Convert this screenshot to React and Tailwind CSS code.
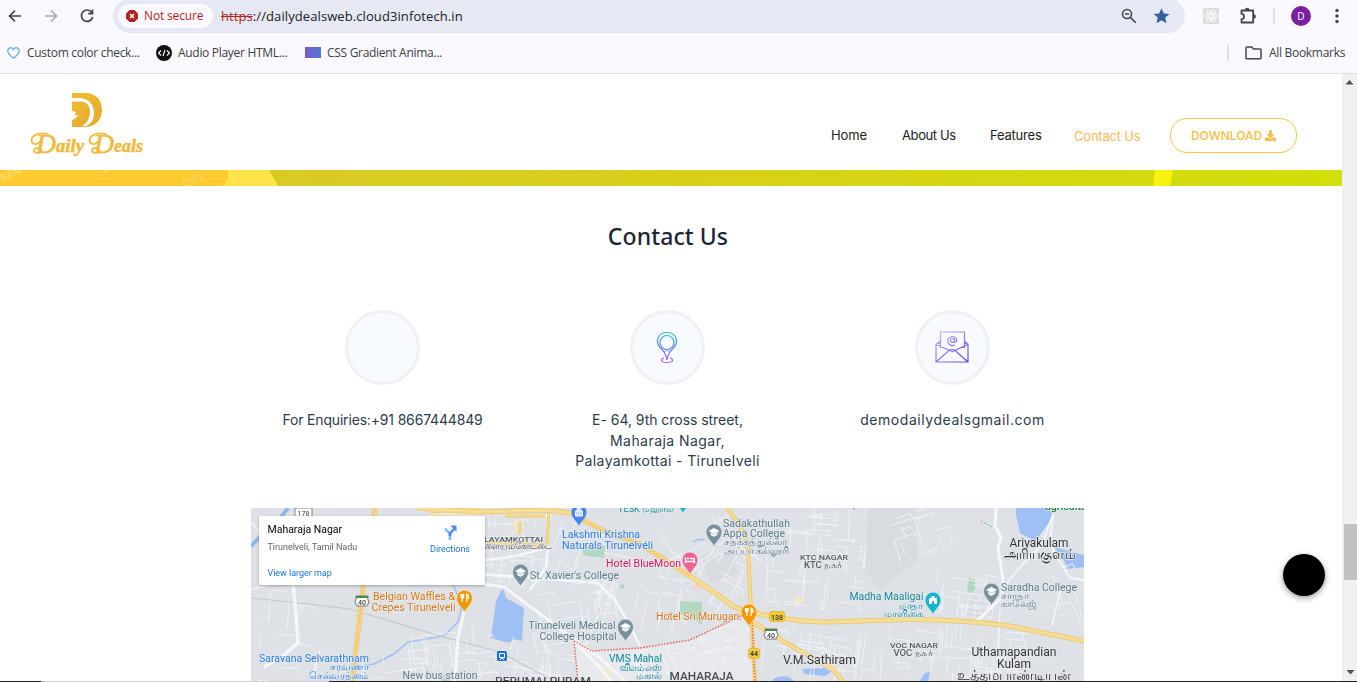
import React from 'react';
import { FaDownload } from 'react-icons/fa';

function makeRandom(seed) {
  let s = seed;
  return () => {
    s = (s * 16807) % 2147483647;
    return s / 2147483647;
  };
}

const districts = [
  [251, 590, 60, 92, 4, 14, 11],
  [310, 650, 120, 32, -8, 20, 12],
  [395, 630, 100, 52, -6, 34, 13],
  [487, 508, 62, 78, 3, 34, 14],
  [550, 520, 70, 60, 20, 14, 15],
  [528, 585, 90, 60, -10, 26, 16],
  [590, 560, 100, 75, 12, 26, 17],
  [640, 508, 100, 60, -30, 22, 18],
  [600, 640, 145, 42, -16, 44, 19],
  [765, 508, 100, 100, 4, 62, 20],
  [762, 626, 115, 56, 8, 36, 21],
  [880, 512, 70, 45, -18, 18, 22],
  [935, 570, 60, 46, 8, 30, 23],
  [875, 625, 150, 57, 3, 60, 24],
  [1030, 560, 54, 70, -20, 8, 25],
  [690, 540, 60, 65, 30, 18, 26],
  [500, 640, 75, 42, 10, 24, 27],
];

const streets = districts.map(([x, y, w, h, angle, n, seed]) => {
  const rnd = makeRandom(seed * 7919);
  let d = '';
  for (let i = 0; i < n; i++) {
    const px = x + rnd() * w;
    const py = y + rnd() * h;
    const len = 8 + rnd() * 24;
    if (rnd() > 0.5) {
      d += `M${px.toFixed(1)} ${py.toFixed(1)}h${Math.min(len, x + w - px).toFixed(1)}v${(rnd() * 8).toFixed(1)}`;
    } else {
      d += `M${px.toFixed(1)} ${py.toFixed(1)}v${Math.min(len, y + h - py).toFixed(1)}h${(rnd() * 8 - 4).toFixed(1)}`;
    }
  }
  return { d, t: `rotate(${angle} ${x + w / 2} ${y + h / 2})` };
});

function Pin({ x, y, color, children }) {
  return (
    <g transform={`translate(${x} ${y})`}>
      <path d="M0 14.5C-1.2 10-7.8 6.5-7.8 0a7.8 7.8 0 1 1 15.6 0C7.8 6.5 1.2 10 0 14.5Z" fill={color} stroke="#ffffff" strokeOpacity=".5" strokeWidth=".6" />
      {children}
    </g>
  );
}

const Cap = () => <path d="M-5-1 0-3.8 5-1 0 1.8ZM-3 1v2L0 4.6 3 3V1L0 2.7ZM4.3-.5v3" fill="#fff" stroke="#fff" strokeWidth=".5" />;
const Fork = () => <path d="M-3.5-4v3q0 1 1.3 1V4M-2.2-4v4M-.9-4v3q0 1-1.3 1M2.2 4v-8q2 1 1.8 4.500h-1.800" fill="none" stroke="#fff" strokeWidth="1.2" />;

function T({ x, y, w, size = 10.5, fill, weight = 400, anchor = 'start', children }) {
  return (
    <text
      x={x}
      y={y}
      fontSize={size}
      fill={fill}
      fontWeight={weight}
      textAnchor={anchor}
      textLength={w}
      lengthAdjust="spacingAndGlyphs"
      stroke="#e6e9ed"
      strokeWidth="1.5"
      strokeLinejoin="round"
      paintOrder="stroke"
    >
      {children}
    </text>
  );
}

const yellowRoads = [
  ['M417 508 480 512 549 510 570 513 602 530 640 544 690 576 735 607Q748 613 777 617 800 622 830 622L905 619.500Q960 619 1010 626L1084 641', 4.5],
  ['M727 508Q745 530 748 548L751 612', 3.5],
  ['M751 612 755 682', 3.5],
  ['M740 612 765 630 800 651 822 663Q835 668 843 682', 4],
  ['M375 508 364 580 357 640 352 682', 4.5],
  ['M549 509 547 545M430 512 480 508M505 516 545 516M520 522 520 534M485 543 545 545', 2.5],
];

function MapCanvas() {
  const slate = '#5f7c88';
  const teal = '#12899a';
  const blue = '#2a7de1';
  const orange = '#d97a16';
  return (
    <svg viewBox="251 508 833 173" width="833" height="173" className="block" fontFamily='Roboto, "Noto Sans", sans-serif'>
      <rect x="251" y="508" width="833" height="173" fill="#dee1e6" />
      <path d="M574 641 592 651 640 648 690 640 750 614 754 682H578Z" fill="#e7e9ec" />
      <g fill="#d8dce1">
        <path d="M868 508 915 508 918 560 880 590 865 570Z" />
        <path d="M700 555h32l6 20-28 8z" />
        <path d="M965 600h20l2 16h-22z" />
      </g>
      <g fill="#b0d9bf">
        <path d="m583 545 22 1-1 12-21-3z" />
        <path d="m680 601 22 1v24l-8-8-14-4z" />
        <path d="m969 577 6 1v12l-5 3-3-2z" />
        <path d="m620 585 4-1v4l-4 1z" />
        <path d="m441 682 4-8 6 8z" />
      </g>
      <g fill="#f8e9c4">
        <path d="M795 597h9v7h-9zM602 672l8-3v12h-8zM430 510h50v6h-50zM513 520h8v12h-8z" opacity=".8" />
      </g>
      <path d="m692 584 8-2v6l-8 2z" fill="#f6d5cd" />
      <g fill="#9fc0f5">
        <path d="m502 589 2 2 2 7 18 10-2 33-7-2-6 4-18-5 5-37z" />
        <path d="M1016 508h37l-2 12-16 21-15-8-4-18z" />
        <path d="m1054 547 30 8v12l-16 2-5-10z" />
        <path d="M771 682q6-8 18-5l6 5zM802 669l18-1q5-2 11 4l-6 4-20-2zM919 682l5-8 6-3-2 11z" />
      </g>
      <path d="M251 546 262 535 278 521 288 508" fill="none" stroke="#8fb6ef" strokeWidth="4" />
      <path d="M462 606 458 622 444 636 408 642 394 654 374 664 350 668" fill="none" stroke="#a2c1f0" strokeWidth="1.500" />
      <path d="M453 585 460 600M693 542q6-4 12-2" fill="none" stroke="#a2c1f0" strokeWidth="1.500" />
      <g fill="none" stroke="#f3f5f7" strokeWidth=".85" opacity=".9">
        {streets.map((s, i) => (
          <path key={i} d={s.d} transform={s.t} />
        ))}
      </g>
      <path d="M251 598 290 602 350 609 440 636 500 652 556 682" fill="none" stroke="#c3c7cc" strokeWidth="1.200" />
      <g fill="none" stroke="#f6f7f9" strokeLinejoin="round">
        <path d="M293 584 296 615 298 643 284 655 264 667" strokeWidth="3.500" />
        <path d="M464 612 458 638 455 682" strokeWidth="3" />
        <path d="M478 583 504 587 532 608 560 629 600 658 626 682" strokeWidth="3" />
        <path d="M548 546 546 567 530 590M480 574 560 580 598 583 615 600 628 622 640 646" strokeWidth="2.500" />
        <path d="M485 560Q515 558 545 548" strokeWidth="2" />
        <path d="M575 642 600 668 612 682" strokeWidth="3" />
        <path d="M996 508 995 525 1001 538 998 548 1003 580 1002 597 976 622" strokeWidth="3" />
        <path d="M1053 514 1042 545 1024 563 1002 588M1053 514 1050 545 1070 578 1084 580" strokeWidth="1.800" />
        <path d="M1000 610 997 682M1052 626 1060 590 1070 588" strokeWidth="1.400" />
        <path d="M251 522 300 575 251 590M320 650 312 680" strokeWidth="1.200" />
      </g>
      <g fill="none" stroke="#edc66a">
        {yellowRoads.map(([d, w]) => (
          <path key={d} d={d} strokeWidth={w + 0.6} />
        ))}
      </g>
      <g fill="none" stroke="#f6dc94">
        {yellowRoads.map(([d, w]) => (
          <path key={d} d={d} strokeWidth={w - 1} />
        ))}
      </g>
      <path d="M375 508 364 580 357 640 352 682M570 513 602 530 640 544 690 576" fill="none" stroke="#f0b83f" strokeWidth=".8" />
      <path d="M574 641 592 651 640 648 690 640 745 614M574 641 578 682M752 622 755 682" fill="none" stroke="#ea5a50" strokeWidth="1.400" strokeDasharray="1.500 1.500" />
      <path d="m981 521 11 6" stroke="#6cc08a" strokeWidth="1" strokeDasharray="2 1.500" />

      <Pin x={579} y={512} color="#4285f4"><path d="M-3.500-1h7v5h-7zM-1.800-1v-2.500h3.600V-1" fill="#fff" fillOpacity=".7" stroke="#fff" /></Pin>
      <Pin x={683} y={499} color="#12b5cb" />
      <Pin x={854} y={496} color="#4285f4" />
      <Pin x={714} y={532} color="#78909c"><Cap /></Pin>
      <Pin x={520.500} y={572} color="#78909c"><Cap /></Pin>
      <Pin x={625.500} y={627} color="#78909c"><Cap /></Pin>
      <Pin x={991.500} y={591} color="#78909c"><Cap /></Pin>
      <Pin x={690} y={560} color="#f06292"><path d="M-4.500-3v6M-4.500 1.500h9V3M-3-1.500h2M0-1.500h4V1" fill="none" stroke="#fff" strokeWidth="1.500" /></Pin>
      <Pin x={464.500} y={598} color="#f29900"><Fork /></Pin>
      <Pin x={749} y={612} color="#f29900"><Fork /></Pin>
      <Pin x={933} y={600} color="#12b5cb"><path d="M-4 4v-6h2.500v-2h3v2H4v6H1V1h-2v3Z" fill="#fff" /></Pin>
      <g>
        <rect x="497" y="651" width="10" height="10" rx="1.500" fill="#1a6fe8" />
        <path d="M499.500 653.500h5v4h-5zM500 660l1-1.500h2l1 1.500" fill="none" stroke="#fff" />
      </g>

      <g fontSize="7" fontWeight="700" textAnchor="middle" fill="#444">
        <rect x="295" y="508" width="17" height="9" fill="#fff" stroke="#666" strokeWidth=".8" />
        <text x="303.500" y="515.500" fontWeight="400">178</text>
        {[[362, 601], [771, 634]].map(([x, y]) => (
          <g key={x}>
            <path d={`M${x - 6} ${y - 5}h12q-1 3 1 6l-2 4H${x - 5}l-2-4q2-3 1-6Z`} fill="#fff" stroke="#555" strokeWidth=".8" />
            <path d={`M${x - 6} ${y - 5}h12v2H${x - 6}Z`} fill="#4b8a3f" />
            <text x={x} y={y + 3.500} fontWeight="500">40</text>
          </g>
        ))}
        <rect x="769.500" y="611.500" width="15" height="10" rx="2" fill="#f7cb2f" stroke="#d8aa1b" strokeWidth=".6" />
        <text x="777" y="619.500">138</text>
        <rect x="748.500" y="648.500" width="11" height="10" rx="2" fill="#f7cb2f" stroke="#d8aa1b" strokeWidth=".6" />
        <text x="754" y="656">44</text>
      </g>

      <T x={618} y={512} w={56} size={9.500} fill={teal}>TESK மஹால்</T>
      <T x={562} y={538} w={78} fill={blue}>Lakshmi Krishna</T>
      <T x={562} y={548.500} w={91} fill={blue}>Naturals Tirunelvéli</T>
      <T x={606} y={567} w={75} fill="#d81b60">Hotel BlueMoon</T>
      <T x={723} y={526.500} w={67} fill={slate}>Sadakathullah</T>
      <T x={723} y={537} w={62} fill={slate}>Appa College</T>
      <T x={724} y={545} w={63} size={9.500} fill={slate}>சதக்கத்துல்லா</T>
      <T x={724} y={554} w={65} size={9.500} fill={slate}>அப்பா கல்லூரி</T>
      <T x={800} y={560} w={48} size={8} fill="#555b61" weight={500}>KTC NAGAR</T>
      <T x={804} y={568} w={39} size={8.500} fill="#555b61" weight={500}>KTC நகர்</T>
      <T x={484} y={541.500} w={59} size={8} fill="#555b61" weight={500}>LAYAMKOTTAI</T>
      <T x={484} y={549} w={68} size={9.500} fill="#444a50" weight={500}>ளையம்கோட்டை</T>
      <T x={530} y={579} w={89} fill={slate}>St. Xavier's College</T>
      <T x={373} y={600} w={82} fill={orange}>Belgian Waffles &amp;</T>
      <T x={371.500} y={610.500} w={84} fill={orange}>Crepes Tirunelveli</T>
      <T x={656} y={620} w={86} fill={orange}>Hotel Sri Murugan.</T>
      <T x={528.500} y={629} w={87} fill={slate}>Tirunelveli Medical</T>
      <T x={539.500} y={639.500} w={77} fill={slate}>College Hospital</T>
      <T x={259} y={661.500} w={110} fill={blue}>Saravana Selvarathnam</T>
      <T x={330} y={670} w={39} size={10} fill={blue}>சரவணா</T>
      <T x={309} y={679} w={60} size={10} fill={blue}>செல்வரத்னம்</T>
      <T x={402.500} y={679} w={75} fill={slate}>New bus station</T>
      <T x={495} y={684.500} w={96} size={11} fill="#4a4f55" weight={500}>PERUMALPURAM</T>
      <T x={609} y={662} w={53} fill={teal}>VMS Mahal</T>
      <T x={620} y={670.500} w={42} size={10} fill={teal}>விஎம்எஸ்</T>
      <T x={636} y={679} w={26} size={10} fill={teal}>மகால்</T>
      <T x={669.500} y={679.500} w={64} size={11} fill="#4a4f55" weight={500}>MAHARAJA</T>
      <T x={783} y={664} w={73} size={12} fill="#333">V.M.Sathiram</T>
      <T x={849.500} y={600} w={74} fill={teal}>Madha Maaligai</T>
      <T x={899} y={608.500} w={24} size={10} fill={teal}>மாதா</T>
      <T x={884} y={616.500} w={39} size={10} fill={teal}>மாளிகை</T>
      <T x={890} y={648} w={48} size={8} fill="#555b61" weight={500}>VOC NAGAR</T>
      <T x={893.500} y={656} w={40} size={8.500} fill="#555b61" weight={500}>VOC நகர்</T>
      <T x={1001} y={590.500} w={76} fill={slate}>Saradha College</T>
      <T x={1001} y={599} w={28} size={10} fill={slate}>சாரதா</T>
      <T x={1001} y={607} w={35} size={10} fill={slate}>காலேஜ்</T>
      <T x={1009.500} y={547} w={59} size={12} fill="#333">Ariyakulam</T>
      <T x={1003.500} y={559} w={72} size={13.500} fill="#333">அரியகுளம்</T>
      <T x={971.500} y={656} w={85} size={12} fill="#333">Uthamapandian</T>
      <T x={997} y={668} w={34} size={12} fill="#333">Kulam</T>
      <T x={956.500} y={679.500} w={115} size={13.500} fill="#333">உத்தமபாண்டியன்</T>
      <T x={1045} y={509.500} w={42} size={9.500} fill="#188038" weight={500}>agricultu</T>
    </svg>
  );
}

function BrowserBar() {
  return (
    <header className='h-[74px] shrink-0 border-b border-[#dfdfe8] bg-[#faf9ff] font-["Open_Sans",sans-serif] text-[#3c4043]'>
      <div className="flex h-8 items-center">
        <div className="flex w-[113px] shrink-0 items-center gap-5 pl-[7px]">
          <svg width="16" height="16" viewBox="0 0 16 16" fill="none" stroke="#3c4353" strokeWidth="1.700"><path d="M14 8H3M8 2.500 2.500 8 8 13.500" /></svg>
          <svg width="16" height="16" viewBox="0 0 16 16" fill="none" stroke="#a9abb1" strokeWidth="1.700"><path d="M2 8h11M8 2.500 13.500 8 8 13.500" /></svg>
          <svg width="16" height="16" viewBox="0 0 16 16" fill="none" stroke="#3c4353" strokeWidth="1.700"><path d="M13 4.700A5.700 5.700 0 1 0 13.700 9M13.500 1.500v4.200H9.200" /></svg>
        </div>
        <div className="flex h-[34px] w-[1072px] shrink-0 items-center rounded-full bg-[#e6e8f3] pl-[5px]">
          <div className="flex h-6 w-[95px] items-center gap-[6px] rounded-full bg-[#faf9ff] pl-2 text-[12px] whitespace-nowrap text-[#b3261e]">
            <svg width="12" height="12" viewBox="0 0 12 12" className="shrink-0"><path d="M3.500 0h5L12 3.500v5L8.500 12h-5L0 8.500v-5Z" fill="#b3261e" /><path d="m4 4 4 4m0-4L4 8" stroke="#fff" strokeWidth="1.400" /></svg>
            <span className="tracking-[-0.150px]">Not secure</span>
          </div>
          <div className="ml-2 grow pt-px text-[13px] tracking-[0.090px] whitespace-nowrap text-[#202124]">
            <span className="text-[#b3261e] line-through">https</span>://dailydealsweb.cloud3infotech.in
          </div>
          <div className="flex items-center gap-4 pr-[15px]">
            <svg width="16" height="16" viewBox="0 0 16 16" fill="none" stroke="#46484e" strokeWidth="1.600"><circle cx="6" cy="6" r="4.500" /><path d="m9.400 9.400 5.400 5.400M4 6h4" /></svg>
            <svg width="17" height="16" viewBox="0 0 17 16"><path d="m8.500.3 2.300 5.100 5.700.5-4.300 3.700 1.300 5.700-5-3-5 3 1.300-5.700L.5 5.900l5.700-.5Z" fill="#35609f" /></svg>
          </div>
        </div>
        <div className="flex items-center pl-[18px]">
          <svg width="16" height="16" viewBox="0 0 16 16"><path fill="#dedede" d="M0 0h16v16H0z" /><g fill="none" stroke="#fff" strokeWidth=".9"><ellipse cx="8" cy="8" rx="6.500" ry="2.500" /><ellipse cx="8" cy="8" rx="6.500" ry="2.500" transform="rotate(60 8 8)" /><ellipse cx="8" cy="8" rx="6.500" ry="2.500" transform="rotate(120 8 8)" /></g><circle cx="8" cy="8" r="1.200" fill="#fff" /></svg>
          <svg className="ml-[20px]" width="18" height="18" viewBox="0 0 18 18"><path d="M2.500 3.500h11.700v12H2.500v-3.300c3.400-.3 3.400-5 0-5.300Z" fill="none" stroke="#3f4653" strokeWidth="1.800" strokeLinejoin="round" /><path d="M6 3a2.200 2.200 0 0 1 4.400 0ZM14.700 7.300a2.200 2.200 0 0 1 0 4.400Z" fill="#3f4653" /></svg>
          <span className="ml-[16px] h-4 w-[2px] bg-[#d5e2fb]" />
          <span className="ml-[16px] flex size-5 items-center justify-center rounded-full bg-[#7b1fa2] text-[10px] text-white">D</span>
          <svg className="ml-[24px]" width="4" height="16" viewBox="0 0 4 16" fill="#3f4653"><circle cx="2" cy="2.500" r="1.700" /><circle cx="2" cy="8" r="1.700" /><circle cx="2" cy="13.500" r="1.700" /></svg>
        </div>
      </div>
      <div className="flex h-[41px] items-center pl-[7px] text-[12px] tracking-[-0.300px] whitespace-nowrap">
        <svg width="13" height="12" viewBox="0 0 13 12" fill="none" stroke="#68b2ef" strokeWidth="1.400"><path d="M6.500 11.200C3 8.500.8 6.500.8 4A3 3 0 0 1 6.500 2.500 3 3 0 0 1 12.200 4c0 2.500-2.200 4.500-5.700 7.200Z" /></svg>
        <span className="ml-[7px] w-[129px]">Custom color check...</span>
        <svg width="16" height="16" viewBox="0 0 16 16"><circle cx="8" cy="8" r="8" fill="#111" /><path d="M5 5.500 2.500 8 5 10.500M11 5.500 13.500 8 11 10.500M9 5l-2 6" fill="none" stroke="#fff" strokeWidth="1.100" /></svg>
        <span className="ml-[6px] w-[127px]">Audio Player HTML...</span>
        <span className="h-[11px] w-4 bg-linear-to-r from-[#7a5acb] to-[#5077d4]" />
        <span className="ml-[6px] grow">CSS Gradient Anima...</span>
        <span className="h-4 w-[2px] bg-[#d5e2fb]" />
        <svg className="ml-[16px]" width="17" height="14" viewBox="0 0 17 14" fill="none" stroke="#45474c" strokeWidth="1.500"><path d="M1 2.500V12q0 .8.800.8h13.400q.8 0 .8-.8V3.700q0-.8-.8-.8H8.500L6.800 1H1.800Q1 1 1 2.500Z" /></svg>
        <span className="ml-[7px] w-[88px]">All Bookmarks</span>
      </div>
    </header>
  );
}

function Logo() {
  return (
    <svg width="116" height="68" viewBox="29 91 116 68" className="ml-[29px]">
      <defs>
        <linearGradient id="gold" x1="0" y1="0" x2="1" y2="1">
          <stop offset="0" stopColor="#f0bd31" />
          <stop offset="1" stopColor="#e5a92b" />
        </linearGradient>
      </defs>
      <path d="M72 93h13c11 0 17 7 17 17s-7 17-17 17h-2c7-2 11-6 11-14 0-9-6-14.500-14-15h-8Z" fill="url(#gold)" />
      <path d="M72 101.500h9c5.500 0 9 4.500 9 10 0 6-3 12-8 14.500l4 1H72v-6.500l7-5-4.500-.3 1.500-3.200-4-1Z" fill="url(#gold)" />
      <g fill="#f2b93b" stroke="#f2b93b" strokeWidth=".5" fontFamily='"Liberation Serif", serif' fontStyle="italic" fontWeight="700">
        <text x="36" y="152.500" fontSize="27" fontWeight="400" textLength="20" lengthAdjust="spacingAndGlyphs">D</text>
        <text x="56" y="151.500" fontSize="18" textLength="28" lengthAdjust="spacingAndGlyphs">aily</text>
        <text x="94" y="152.500" fontSize="27" fontWeight="400" textLength="20" lengthAdjust="spacingAndGlyphs">D</text>
        <text x="114" y="151.500" fontSize="18" textLength="29" lengthAdjust="spacingAndGlyphs">eals</text>
      </g>
      <g fill="none" stroke="#f2b93b" strokeWidth="1.700" strokeLinecap="round">
        <path d="M48 134c-8-2-16 1-16.500 6-.3 4.500 5.500 5.500 7.500 2M41 150c-2-3-7-2-7 .5 0 3 5 3 8 1" />
        <path d="M106 134c-8-2-16 1-16.500 6-.3 4.500 5.500 5.500 7.500 2M99 150c-2-3-7-2-7 .5 0 3 5 3 8 1" />
      </g>
    </svg>
  );
}

function SiteNav() {
  return (
    <div className="flex h-24 shrink-0 items-start pt-[17px]">
      <Logo />
      <nav className="ml-auto flex items-center pt-[27px] pr-[45px] text-[13px] whitespace-nowrap text-[#222]">
        <a className="w-[71px] tracking-[-0.080px]">Home</a>
        <a className="w-[88px] tracking-[-0.400px]">About Us</a>
        <a className="w-[84px] tracking-[-0.200px]">Features</a>
        <a className="w-[96px] pt-[2px] tracking-[-0.200px] text-[#fdb858]">Contact Us</a>
        <a className="flex h-[35px] w-[127px] items-center justify-center gap-[3px] rounded-[17px] border border-[#f5c842] text-[12px] font-medium text-[#f9bd45]">
          DOWNLOAD <FaDownload className="size-[11px]" />
        </a>
      </nav>
    </div>
  );
}

function HeroStrip() {
  return (
    <svg width="1342" height="16" viewBox="0 170 1342 16" className="block shrink-0">
      <defs>
        <linearGradient id="hero" x1="0" x2="1"><stop offset="0" stopColor="#dac52c" /><stop offset=".55" stopColor="#d7d118" /><stop offset="1" stopColor="#d2df0a" /></linearGradient>
      </defs>
      <path d="M0 170h1342v16H0z" fill="url(#hero)" />
      <path d="M0 170h269l9 16H0z" fill="#fde44a" />
      <path d="M0 170h227q4 9-5 16H0z" fill="#ffcb31" />
      <path d="M1155 170h18l-3 16h-17z" fill="#f8f20e" />
      <g fill="#ffe07a" fontFamily="Inter, sans-serif" fontSize="10">
        <text x="2" y="182" transform="rotate(-25 2 182)">BANK</text>
        <text x="103" y="174" transform="rotate(-25 103 174)">987</text>
        <text x="184" y="187" transform="rotate(-20 184 187)" opacity=".7">0/02</text>
      </g>
    </svg>
  );
}

function Medallion({ children }) {
  return <div className="flex size-[75px] items-center justify-center rounded-full border-[3px] border-[#f1f1f1] bg-[#f7faff]">{children}</div>;
}

function ContactColumn({ icon, children }) {
  return (
    <div className="flex w-[285px] flex-col items-center text-[14px] leading-[20.500px] whitespace-nowrap text-[#2d3b4e]">
      <Medallion>{icon}</Medallion>
      <div className="mt-[25px] text-center">{children}</div>
    </div>
  );
}

const PinIcon = (
  <svg className="mr-px" width="24" height="34" viewBox="0 0 24 34" fill="none" stroke="url(#pinStroke)" strokeWidth="1.200">
    <defs><linearGradient id="pinStroke" gradientUnits="userSpaceOnUse" x1="12" y1="0" x2="12" y2="34"><stop stopColor="#22c3d8" /><stop offset=".45" stopColor="#5b87e6" /><stop offset="1" stopColor="#b94df5" /></linearGradient></defs>
    <path d="M12 29c-.8-5-2.300-8-5.500-11C-1.500 10.500 3.500 1.500 12 1.500S25.500 10.500 17.500 18C14.300 21 12.800 24 12 29Z" />
    <circle cx="12" cy="11.500" r="7" />
    <path d="M9 27c-4 1-3.500 4.500 3 4.500s7-3.500 3-4.500" />
    <path d="M9.500 20h1m1 0h1m1 0h1" />
  </svg>
);

const MailIcon = (
  <svg className="mr-px mb-px" width="34" height="32" viewBox="0 0 34 32" fill="none" stroke="url(#mailStroke)" strokeWidth="1.200">
    <defs><linearGradient id="mailStroke" gradientUnits="userSpaceOnUse" x1="4" y1="0" x2="30" y2="32"><stop stopColor="#c5b1fa" /><stop offset="1" stopColor="#6047ec" /></linearGradient></defs>
    <path d="M5.500 17V1h24v16M1 13.500h0V31h32V13.500L17.500 20.500 1 13.500M1 31l13-11.500q3.500-2.500 6 0L33 31M5 10l-4 3.500M29.500 10l3.500 3.500M2 12.500h3M29.500 12.500h3" />
    <circle cx="17.500" cy="9.500" r="2" />
    <path d="M19.500 7.500v3q1.500 1.500 2.300-1a4.500 4.500 0 1 0-2 4.300" />
  </svg>
);

function PlaceCard() {
  return (
    <div className='absolute top-2 left-2 flex h-[69px] w-[226px] justify-between rounded-[2px] bg-white font-[Roboto,sans-serif] whitespace-nowrap shadow-[0_1px_3px_rgba(0,0,0,0.3)]'>
      <div className="pl-[8.500px]">
        <p className="mt-[6px] text-[10.500px] leading-[15px] text-black">Maharaja Nagar</p>
        <p className="mt-[4px] text-[9px] leading-[13px] tracking-[-0.030px] text-[#5f6368]">Tirunelveli, Tamil Nadu</p>
        <p className="mt-[13px] text-[9px] leading-[13px] tracking-[-0.030px] text-[#1a73e8]">View larger map</p>
      </div>
      <div className="flex w-[70px] flex-col items-center pt-[9px] text-[9px] text-[#1a73e8]">
        <svg width="14" height="15" viewBox="0 0 14 15"><path d="M7 15V9L2 3.500" fill="none" stroke="#8ab6f6" strokeWidth="2.600" /><path d="M7 11V8.500l4-4.500" fill="none" stroke="#4a8df0" strokeWidth="2.600" /><path d="M7.500.5H13.500v6.500Z" fill="#4a8df0" /></svg>
        <span className="mt-[3px] leading-[13px] tracking-[-0.050px]">Directions</span>
      </div>
    </div>
  );
}

function ScrollBar() {
  return (
    <div className="flex w-[15px] shrink-0 flex-col items-center bg-[#f0f0f0]">
      <svg className="mt-[6px]" width="9" height="5" viewBox="0 0 9 5"><path d="M4.500 0 8.500 4.500h-8z" fill="#505050" /></svg>
      <div className="mt-[439px] ml-[2px] h-[56px] w-[13px] bg-[#c1c1c1]" />
      <svg className="mt-[90px] ml-[1px]" width="9" height="5" viewBox="0 0 9 5"><path d="M.5 0h8l-4 4.500z" fill="#505050" /></svg>
    </div>
  );
}

export default function App() {
  return (
    <div className='flex h-[682px] w-[1357px] flex-col overflow-hidden bg-white font-["Inter",sans-serif]'>
      <BrowserBar />
      <div className="flex h-[607px] shrink-0">
        <main className="relative flex w-[1342px] flex-col">
          <SiteNav />
          <HeroStrip />
          <h1 className='mt-[33px] w-[1336px] text-center font-["Noto_Sans",sans-serif] text-[23px] leading-[34px] font-medium tracking-[0.100px] text-[#1c2536]'>Contact Us</h1>
          <section className="mt-[57px] ml-[240px] flex h-[198px]">
            <ContactColumn>
              <p className="tracking-[-0.170px]">For Enquiries:+91 8667444849</p>
            </ContactColumn>
            <ContactColumn icon={PinIcon}>
              <p className="tracking-[-0.040px]">E- 64, 9th cross street,</p>
              <p className="tracking-[0.450px]">Maharaja Nagar,</p>
              <p className="tracking-[0.370px]">Palayamkottai - Tirunelveli</p>
            </ContactColumn>
            <ContactColumn icon={MailIcon}>
              <p className="tracking-[0.550px]">demodailydealsgmail.com</p>
            </ContactColumn>
          </section>
          <section className="relative ml-[251px] h-[173px] w-[833px] overflow-hidden">
            <MapCanvas />
            <PlaceCard />
          </section>
          <div className="absolute top-[480px] left-[1283px] size-[42px] rounded-full bg-black shadow-[0_2px_6px_rgba(0,0,0,0.4)]" />
        </main>
        <ScrollBar />
      </div>
      <div className="flex h-px shrink-0 bg-[#202020]">
        <span className="ml-[41px] w-[288px] bg-[#cfcfcf]" />
      </div>
    </div>
  );
}
